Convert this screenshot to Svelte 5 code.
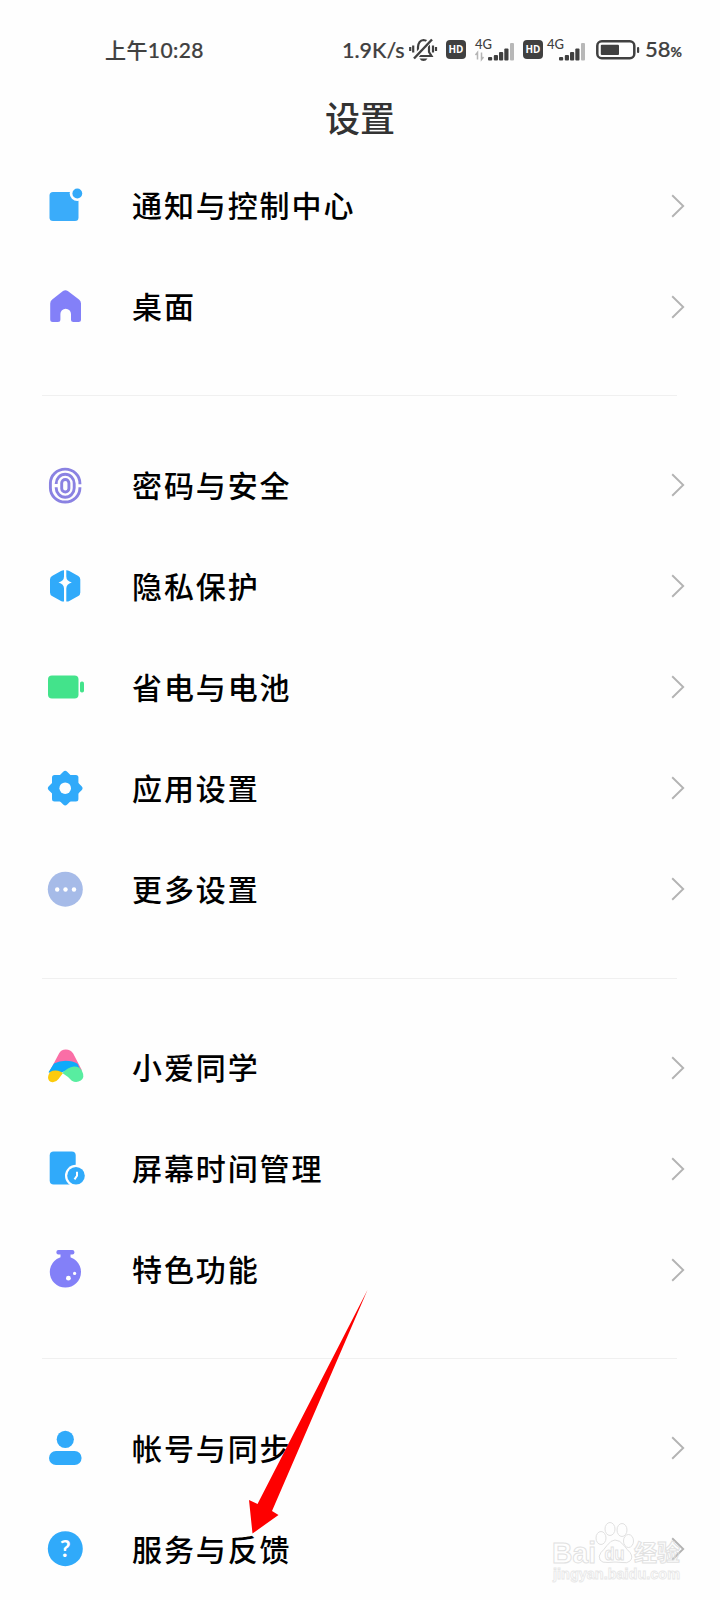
<script lang="ts">
	interface Item {
		icon: string;
		label: string;
	}

	const sections: Item[][] = [
		[
			{ icon: 'notification', label: '通知与控制中心' },
			{ icon: 'home', label: '桌面' }
		],
		[
			{ icon: 'fingerprint', label: '密码与安全' },
			{ icon: 'privacy', label: '隐私保护' },
			{ icon: 'battery', label: '省电与电池' },
			{ icon: 'gear', label: '应用设置' },
			{ icon: 'more', label: '更多设置' }
		],
		[
			{ icon: 'assistant', label: '小爱同学' },
			{ icon: 'screentime', label: '屏幕时间管理' },
			{ icon: 'flask', label: '特色功能' }
		],
		[
			{ icon: 'account', label: '帐号与同步' },
			{ icon: 'help', label: '服务与反馈' }
		]
	];
</script>

{#snippet hd()}
	<svg class="hd" viewBox="0 0 20 19">
		<rect width="20" height="19" rx="4" fill="#404040" />
		<text x="10" y="13.3" text-anchor="middle" textLength="15" lengthAdjust="spacingAndGlyphs">HD</text>
	</svg>
{/snippet}

{#snippet signal(data: boolean)}
	<svg class="signal" class:wide={data} viewBox={data ? '0 0 36 24' : '-3 0 41 24'}>
		<text x={data ? 0 : -3} y="10.5" textLength="17" lengthAdjust="spacingAndGlyphs">4G</text>
		{#if data}
			<path d="M2.5 21.5v-7l-2 2.5M6.5 14.5v7l2-2.5" fill="none" stroke="#b5b5b5" stroke-width="1.5" />
		{/if}
		<g transform={data ? 'translate(14)' : 'translate(10)'} fill="#404040">
			<rect x="-1" y="19" width="4.2" height="3.5" rx="1" />
			<rect x="4.8" y="17" width="4.2" height="5.5" rx="1" />
			<rect x="10" y="14" width="4.2" height="8.5" rx="1" />
			<rect x="15.3" y="10.5" width="4.2" height="12" rx="1" />
			<rect x="21" y="5" width="4" height="17.5" rx="1" fill="#b8b8b8" />
		</g>
	</svg>
{/snippet}

{#snippet chevron()}
	<svg class="chevron" viewBox="0 0 14 24">
		<path d="M1.2 1.2 12.2 12 1.2 22.8" fill="none" stroke="#b3b3b3" stroke-width="1.9" />
	</svg>
{/snippet}

{#snippet rowIcon(name: string)}
	<svg class="icon" viewBox="0 0 40 40">
		{#if name === 'notification'}
			<rect x="4.5" y="6" width="29" height="29" rx="3.5" fill="#3aacfa" />
			<circle cx="32.3" cy="7.5" r="7.6" fill="#fefefe" />
			<circle cx="32.3" cy="7.5" r="4.9" fill="#34aaf9" />
		{:else if name === 'home'}
			<path
				d="M18 4q2.4-1.7 4.8 0L34 12.5q2 1.4 2 4v16q0 2.5-2.5 2.5H28.5Q26 35 26 32.5v-5.5a5.3 5.3 0 0 0-10.6 0V32.5q0 2.5-2.5 2.5H7.7Q5.2 35 5.2 32.5V16.5q0-2.6 2-4z"
				fill="#8380f8"
			/>
		{:else if name === 'fingerprint'}
			<g fill="none" stroke="#8a82e2" stroke-width="2.9">
				<path d="M34.9 18.2v-1A14.7 14 0 0 0 5.4 17.2v4.8A14.7 14 0 0 0 34.9 22v-.8" />
				<path d="M11.2 18v-.5a9 9.3 0 0 1 18 0V22a9 9.3 0 0 1-18 0v-.8" />
				<rect x="16.7" y="13.5" width="7.2" height="12.5" rx="3.6" />
			</g>
		{:else if name === 'privacy'}
			<path
				d="M19 3.2v6.3q0 4.5-5.5 6 5.5 1.5 5.5 6v13q-1.5.3-3-.6l-9-5q-2-1.2-2-3.5V12.5Q5 10.2 7 9l9-5q1.5-.9 3-.8z"
				fill="#30aafa"
			/>
			<path
				d="M21.3 3.2v6.3q0 4.5 5.5 6-5.5 1.5-5.5 6v13q1.5.3 3-.6l9-5q2-1.2 2-3.5V12.5q0-2.3-2-3.5l-9-5q-1.5-.9-3-.8z"
				fill="#30aafa"
			/>
		{:else if name === 'battery'}
			<rect x="3" y="7.5" width="30.5" height="23" rx="4" fill="#43e38b" />
			<rect x="35" y="13.5" width="4" height="11" rx="1.8" fill="#43e38b" />
		{:else if name === 'gear'}
			<g fill="#30aafa">
				<rect x="7" y="6" width="26.4" height="26.4" rx="2.5" />
				<rect x="7.2" y="6.2" width="26" height="26" rx="2.8" transform="rotate(45 20.2 19.2)" />
			</g>
			<circle cx="20.2" cy="19.2" r="5.8" fill="#fefefe" />
		{:else if name === 'more'}
			<circle cx="20.3" cy="19.2" r="17.5" fill="#a6bbe8" />
			<g fill="#fff">
				<circle cx="12.2" cy="19.5" r="2.2" />
				<circle cx="20.5" cy="19.5" r="2.2" />
				<circle cx="29" cy="19.5" r="2.2" />
			</g>
		{:else if name === 'assistant'}
			<path d="M14 5.5q2-4 6.8-4T28.2 5.5l8.8 17H5z" fill="#fa6ea6" />
			<path d="M9 15.5q5.5-2.7 11.500-2.7 7.500 0 12 3l4 8.500-7.500 6-9.500-7-8 4-8-3z" fill="#0eaafa" />
			<path d="M5 24q3.5-2 8-1.2 3 .6 5 2.3L13.5 31q-2.5 3.500-6 3.300-4.500-.5-4.500-5 0-2 2-5.300z" fill="#fccb0c" />
			<path d="M17.3 25q5.5-5.8 11.500-6.500 5.500-.3 8 4 3.500 7-1 10-4.300 2.800-9 .3-4-4.500-9.500-7.800z" fill="#58eda0" />
		{:else if name === 'screentime'}
			<rect x="4.7" y="2.5" width="26" height="33" rx="4" fill="#30aafa" />
			<circle cx="31" cy="26.7" r="11" fill="#fefefe" />
			<circle cx="31" cy="26.7" r="8.8" fill="#30aafa" />
			<path d="M32 22.8v4l-2.5 3.5" fill="none" stroke="#fff" stroke-width="2" />
		{:else if name === 'flask'}
			<g fill="#8380f8">
				<rect x="11.4" y="0" width="18" height="4.5" rx="2" />
				<path d="M15.5 3.5h10v4.5h-10z" />
				<circle cx="20.4" cy="22" r="15.6" />
			</g>
			<circle cx="23.4" cy="28.2" r="2.4" fill="#fff" />
			<circle cx="29.6" cy="23.4" r="1.6" fill="#fff" />
		{:else if name === 'account'}
			<circle cx="20.3" cy="10.3" r="8.6" fill="#30aafa" />
			<rect x="4" y="22" width="32.6" height="14" rx="7" fill="#30aafa" />
		{:else if name === 'help'}
			<circle cx="20.3" cy="18.7" r="17.5" fill="#30aafa" />
			<text class="question" x="20.3" y="26.9" text-anchor="middle">?</text>
		{/if}
	</svg>
{/snippet}

<div class="screen">
	<header class="status-bar">
		<span class="time">上午10:28</span>
		<div class="status-right">
			<span class="speed">1.9K/s</span>
			<svg class="bell" viewBox="0 0 28 25">
				<g fill="none" stroke="#404040" stroke-width="2.2">
					<path d="M6.5 19 9 15v-5q.5-6.5 5.5-7 5.5.5 5.5 7v5l2.5 4z" />
					<path d="M4.2 8.5v7M1.2 10v4M24 8.5v7M27 10v4" />
				</g>
				<path d="M4.5 22 22.5 2" stroke="#fefefe" stroke-width="5" />
				<path d="M5 21.5 23 2.5" stroke="#404040" stroke-width="2.4" />
				<path d="M10.5 21.5h8q-1.5 2.5-4 2.5t-4-2.5z" fill="#404040" />
			</svg>
			{@render hd()}
			{@render signal(true)}
			<div class="second-sim">{@render hd()}</div>
			{@render signal(false)}
			<svg class="power" viewBox="0 0 44 20">
				<rect x="1.3" y="1.3" width="37" height="17" rx="4.5" fill="none" stroke="#404040" stroke-width="2.5" />
				<rect x="4.8" y="4.7" width="18.2" height="10.2" rx="1" fill="#404040" />
				<rect x="41" y="7" width="2.2" height="6" rx="1" fill="#404040" />
			</svg>
			<span class="percent">58<small>%</small></span>
		</div>
	</header>

	<h1>设置</h1>

	<main>
		{#each sections as section}
			<section>
				{#each section as item}
					<div class="row">
						{@render rowIcon(item.icon)}
						<span class="label">{item.label}</span>
						{@render chevron()}
					</div>
				{/each}
			</section>
		{/each}
	</main>

	<!-- Pointer to the feedback row -->
	<svg class="arrow" viewBox="0 0 120 246">
		<path d="M119.5 1 24 223 31 226 4.5 244.5 1 211 9.5 215z" fill="none" />
		<path d="M119.5 1 24 222 30.5 226 4.5 244.5 1 211 9.5 215z" fill="#fe0000" />
	</svg>

	<svg class="watermark" viewBox="0 0 150 70">
		<g fill="#fff" stroke="#dcdcdc" stroke-width="1">
			<text class="brand" x="12" y="42.5" textLength="44" lengthAdjust="spacingAndGlyphs">Bai</text>
			<ellipse cx="61" cy="18" rx="5" ry="6.5" />
			<ellipse cx="70" cy="9" rx="5" ry="6.5" />
			<ellipse cx="82" cy="10" rx="5" ry="6.5" />
			<ellipse cx="88.5" cy="21" rx="5" ry="6.5" />
			<path d="M75 20q5 0 9 5.5 3 4 6 7 3.5 5 0 8.5-2.5 2.5-8 1.5-7-1-14 0-6 .5-8-2.5-2-4 1-7.5 3-3 6-7 4-5.5 8-5.5z" />
			<text class="du" x="64.5" y="39.5" textLength="20" lengthAdjust="spacingAndGlyphs">du</text>
			<text class="cjk" x="94" y="41" textLength="46" fill-opacity="0" lengthAdjust="spacingAndGlyphs">经验</text>
		</g>
		<text class="url" x="13" y="59" textLength="127" lengthAdjust="spacingAndGlyphs">jingyan.baidu.com</text>
	</svg>
</div>

<style>
	:global(body) {
		background: #fefefe;
	}

	.screen {
		position: relative;
		width: 720px;
		height: 1600px;
		overflow: hidden;
		background: #fefefe;
		font-family: 'Noto Sans CJK SC', sans-serif;
		color: #000;
	}

	svg {
		overflow: visible;
	}

	.status-bar {
		display: flex;
		justify-content: space-between;
		align-items: center;
		height: 100px;
		box-sizing: border-box;
		padding: 0 0 1px 105px;
		color: #404040;
		font-family: Lato, 'Noto Sans CJK SC', sans-serif;
		line-height: 30px;
		-webkit-text-stroke: 0.2px #404040;
	}

	.time {
		font-size: 21px;
		font-weight: 500;
		letter-spacing: 0.4px;
	}

	.status-right {
		display: flex;
		align-items: center;
		width: 378px;
	}

	.speed {
		width: 67px;
		font-size: 21.5px;
		font-weight: 500;
		white-space: nowrap;
	}

	.bell {
		width: 28px;
		height: 25px;
		margin-right: 9px;
	}

	.hd {
		display: block;
		width: 20px;
		height: 19px;
	}

	.hd text {
		font: 700 10.5px 'Open Sans', sans-serif;
		fill: #fff;
		-webkit-text-stroke: 0;
	}

	.second-sim {
		margin-left: 12px;
	}

	.signal {
		width: 41px;
		height: 24px;
		margin: 0 8px 0 4px;
	}

	.signal.wide {
		width: 36px;
		margin: 0 0 0 9px;
	}

	.signal text {
		font: 500 13px Lato, sans-serif;
		fill: #404040;
	}

	.power {
		width: 44px;
		height: 20px;
		margin-right: 5px;
	}

	.percent {
		margin-top: 2px;
		font-size: 22px;
		font-weight: 500;
		white-space: nowrap;
	}

	.percent small {
		font-size: 14px;
		font-weight: 700;
	}

	h1 {
		margin: 0;
		height: 55px;
		font-size: 35px;
		font-weight: 500;
		line-height: 34px;
		text-align: center;
		color: #333;
	}

	section + section {
		margin-top: 38px;
		padding-top: 38.6px;
		border-top: 1px solid transparent;
		border-image: linear-gradient(90deg, transparent 43px, #f0f0f0 43px, #f0f0f0 676px, transparent 676px) 1;
	}

	.row {
		display: flex;
		align-items: center;
		height: 101px;
		padding: 0 35px 0 45px;
	}

	.icon {
		width: 40px;
		height: 40px;
		margin-top: 1px;
		flex: none;
	}

	.question {
		font: 700 23px Lato, sans-serif;
		fill: #fff;
	}

	.label {
		flex: 1;
		margin: -3px 0 0 47px;
		font-size: 30px;
		font-weight: 500;
		line-height: 44px;
		letter-spacing: 1.9px;
	}

	.chevron {
		width: 14px;
		height: 24px;
	}

	/* Overlays */
	.arrow {
		position: absolute;
		left: 248px;
		top: 1289px;
		width: 120px;
		height: 246px;
	}

	.watermark {
		position: absolute;
		left: 540px;
		top: 1520px;
		width: 150px;
		height: 70px;
		opacity: 0.85;
	}

	.brand {
		font: 700 30px 'Liberation Sans', sans-serif;
	}

	.du {
		font: 700 19px 'Liberation Sans', sans-serif;
	}

	.cjk {
		font: 700 23px 'Noto Sans CJK SC', sans-serif;
	}

	.url {
		font: 700 14px 'Liberation Sans', sans-serif;
		fill: #fff;
		stroke: #e4e4e4;
		stroke-width: 0.8;
	}
</style>
